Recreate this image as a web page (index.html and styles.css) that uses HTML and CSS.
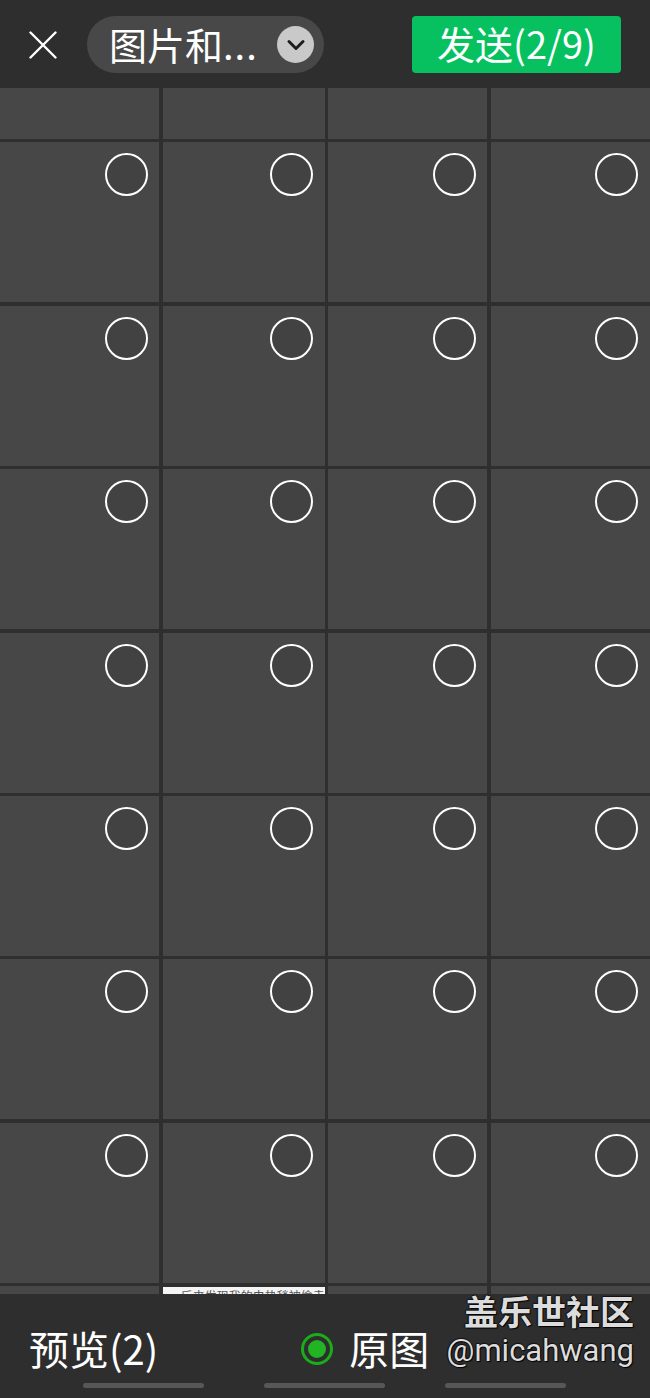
FILE: index.html
```html
<!DOCTYPE html>
<html lang="zh-CN">
<head>
<meta charset="utf-8">
<title>图片和视频</title>
<link rel="stylesheet" href="styles.css">
</head>
<body>
<div class="app">
  <header class="topbar">
    <button class="close" aria-label="关闭">
      <svg width="28" height="28" viewBox="0 0 28 28"><path d="M1.5 1.5 L26.5 26.5 M26.5 1.5 L1.5 26.5" stroke="#fff" stroke-width="2.4" stroke-linecap="round" fill="none"/></svg>
    </button>
    <div class="album">
      <span class="album-name">图片和<span class="dots">...</span></span>
      <span class="album-arrow">
        <svg width="20" height="12" viewBox="0 0 20 12"><path d="M3 2.5 L10 9.5 L17 2.5" stroke="#1e1e1e" stroke-width="3" stroke-linecap="round" stroke-linejoin="round" fill="none"/></svg>
      </span>
    </div>
    <button class="send">发送(2/9)</button>
  </header>

  <main class="gallery">
    <div class="grid">
      <div class="cell"></div><div class="cell"></div><div class="cell"></div><div class="cell"></div>

      <div class="cell"><span class="check"></span></div><div class="cell"><span class="check"></span></div><div class="cell"><span class="check"></span></div><div class="cell"><span class="check"></span></div>
      <div class="cell"><span class="check"></span></div><div class="cell"><span class="check"></span></div><div class="cell"><span class="check"></span></div><div class="cell"><span class="check"></span></div>
      <div class="cell"><span class="check"></span></div><div class="cell"><span class="check"></span></div><div class="cell"><span class="check"></span></div><div class="cell"><span class="check"></span></div>
      <div class="cell"><span class="check"></span></div><div class="cell"><span class="check"></span></div><div class="cell"><span class="check"></span></div><div class="cell"><span class="check"></span></div>
      <div class="cell"><span class="check"></span></div><div class="cell"><span class="check"></span></div><div class="cell"><span class="check"></span></div><div class="cell"><span class="check"></span></div>
      <div class="cell"><span class="check"></span></div><div class="cell"><span class="check"></span></div><div class="cell"><span class="check"></span></div><div class="cell"><span class="check"></span></div>
      <div class="cell"><span class="check"></span></div><div class="cell"><span class="check"></span></div><div class="cell"><span class="check"></span></div><div class="cell"><span class="check"></span></div>

      <div class="cell"></div><div class="cell cell-doc"><p class="doc-text">后来发现我的电热毯被偷走</p></div><div class="cell"></div><div class="cell"></div>
    </div>
  </main>

  <footer class="bottombar">
    <div class="actions">
      <span class="preview">预览(2)</span>
      <span class="original">
        <span class="radio"><span class="radio-dot"></span></span>
        <span class="original-label">原图</span>
      </span>
    </div>
    <div class="gesture">
      <span class="gesture-bar"></span>
      <span class="gesture-bar"></span>
      <span class="gesture-bar"></span>
    </div>
    <div class="watermark">
      <span class="wm-title">盖乐世社区</span>
      <span class="wm-user">@micahwang</span>
    </div>
  </footer>
</div>
</body>
</html>
```

FILE: styles.css
```css
* { box-sizing: border-box; }

html, body {
  margin: 0;
  padding: 0;
  background: #2e2e2e;
}

body {
  font-family: "Noto Sans CJK SC", "Noto Sans", sans-serif;
  color: #fff;
}

.app {
  width: 650px;
  height: 1398px;
  display: flex;
  flex-direction: column;
  overflow: hidden;
}

/* ---------- top bar ---------- */
.topbar {
  height: 88px;
  flex: none;
  display: flex;
  align-items: center;
  padding: 0 29px 0 29px;
  background: #2e2e2e;
}

.close {
  width: 28px;
  height: 28px;
  padding: 0;
  border: 0;
  background: none;
  display: flex;
  margin-top: 2px;
}

.album {
  margin-left: 30px;
  height: 57px;
  width: 237px;
  border-radius: 29px;
  background: #484848;
  display: flex;
  align-items: center;
  padding: 0 10px 0 22px;
}

.album-name {
  font-size: 38px;
  line-height: 1;
  color: #fff;
  white-space: nowrap;
  flex: 1;
}

.dots {
  letter-spacing: 1px;
}

.album-arrow {
  width: 37px;
  height: 37px;
  border-radius: 50%;
  background: #c9c9c9;
  display: flex;
  align-items: center;
  justify-content: center;
  padding-top: 2px;
}

.send {
  margin-left: auto;
  width: 209px;
  height: 57px;
  border: 0;
  border-radius: 4px;
  background: #07c160;
  color: #fff;
  font-family: "Noto Sans CJK SC", "Noto Sans", sans-serif;
  font-size: 38px;
  line-height: 1;
  padding: 0 0 3px 0;
  display: flex;
  align-items: center;
  justify-content: center;
}

/* ---------- gallery ---------- */
.gallery {
  flex: 1;
  overflow: hidden;
  background: #2f2f2f;
}

/* the list is scrolled: only the lower 51px of the first row shows */
.grid {
  margin-top: -109px;
  display: grid;
  grid-template-columns: repeat(4, 1fr);
  grid-auto-rows: 160px;
  gap: 3.4px 3.33px;
}

.cell {
  position: relative;
  background: #474747;
}

.check {
  position: absolute;
  top: 11px;
  right: 11.5px;
  width: 43px;
  height: 43px;
  border-radius: 50%;
  border: 2.6px solid #fff;
  background: rgba(0, 0, 0, 0.07);
}

.cell-doc {
  background: #f4f4f4;
  margin-top: 1px;
}

.doc-text {
  margin: 0;
  padding: 0 0 0 18px;
  font-size: 12px;
  line-height: 14px;
  color: #555;
  text-align: center;
  margin-top: 2px;
  white-space: nowrap;
}

/* ---------- bottom bar ---------- */
.bottombar {
  position: relative;
  height: 104px;
  flex: none;
  background: #2e2e2e;
  padding-top: 20px;
}

.actions {
  height: 69px;
  display: flex;
  align-items: center;
  padding-left: 29px;
}

.preview {
  font-size: 40px;
  line-height: 1;
  padding-bottom: 2px;
}

.original {
  margin-left: 143px;
  display: flex;
  align-items: center;
}

.radio {
  width: 32px;
  height: 32px;
  border-radius: 50%;
  border: 3px solid #1aad19;
  display: flex;
  align-items: center;
  justify-content: center;
}

.radio-dot {
  width: 18px;
  height: 18px;
  border-radius: 50%;
  background: #22b422;
}

.original-label {
  margin-left: 16px;
  font-size: 40px;
  line-height: 1;
  padding-bottom: 2px;
}

.gesture {
  display: flex;
  gap: 60px;
  padding-left: 83px;
}

.gesture-bar {
  width: 121px;
  height: 5px;
  border-radius: 3px;
  background: #575757;
}

.watermark {
  position: absolute;
  right: 16px;
  top: -3px;
  display: flex;
  flex-direction: column;
  align-items: flex-end;
  color: #dcdcdc;
  text-shadow: 1px 1px 1px #000, -1px 0 1px #111, 0 -1px 1px #111;
}

.wm-title {
  font-size: 34px;
  font-weight: 700;
  line-height: 40px;
}

.wm-user {
  font-family: Roboto, "Noto Sans", sans-serif;
  font-size: 31px;
  line-height: 40px;
}
```
